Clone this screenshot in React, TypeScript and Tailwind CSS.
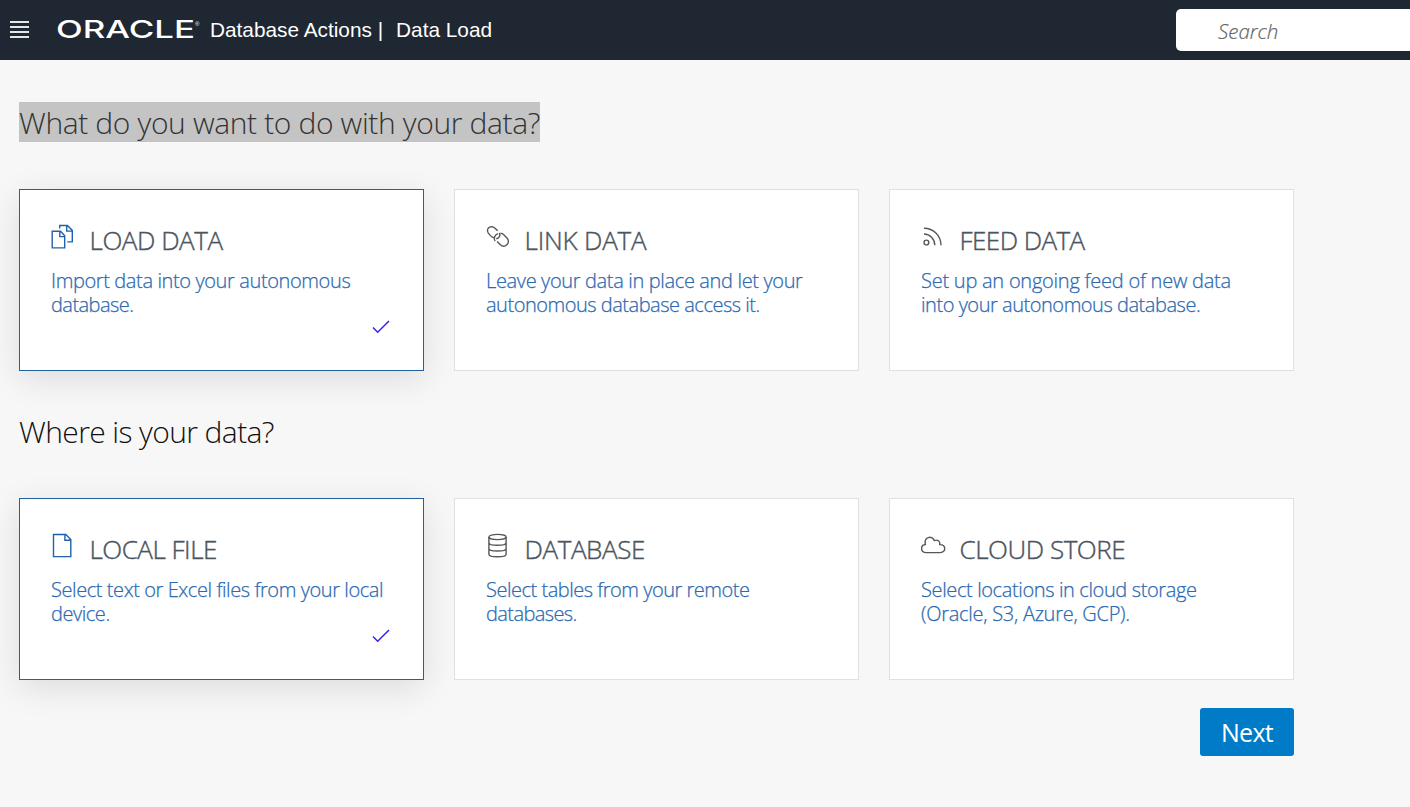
import type { ReactNode } from "react";

type Line = { text: string; tracking: string };
type CardProps = {
  icon: ReactNode;
  title: string;
  titleTracking: string;
  lines: Line[];
  selected?: boolean;
};

const CopyIcon = () => (
  <svg width="24" height="26" viewBox="0 0 24 26" fill="none" stroke="#2262ac" strokeWidth="1.4">
    <path d="M1.2 7.2h8.3l4.2 4.5v12.2H1.2z M8.8 7.2v5.4h4.9" />
    <path d="M8.7 4.6V1.5h7.7l4.9 4.9v11.5h-5 M15.7 1.5v5.6h5.6" />
  </svg>
);

const LinkIcon = () => (
  <svg width="24" height="26" viewBox="0 0 24 26" fill="none" stroke="#55585b" strokeWidth="1.4">
    <path d="M8.2 13.8C6.6 13.6 3.5 10.6 2.2 8.8 0.6 6.4 1.6 3.8 4.4 2.9c2-.6 3.6.2 4.9 1.5l2.4 2.4" />
    <path d="M13.4 8.8c1.4 2.6-.3 5.4-3.2 5.9" />
    <path d="M9.2 17.2c-2-2.7-.5-6.6 3-7.6" />
    <path d="M14.6 9.3c1.4 0 2.4.6 3.4 1.6l3 3.1c2 2.2 1.8 5-.2 6.8-2.1 1.9-4.7 1.6-6.7-.4l-3-3" />
  </svg>
);

const FeedIcon = () => (
  <svg width="24" height="26" viewBox="0 0 24 26" fill="none" stroke="#55585b" strokeWidth="1.4">
    <circle cx="5.4" cy="18.5" r="2.4" />
    <path d="M3 10c6 .1 10.7 4.8 10.8 11.2 M3 4.3c9.2.1 16.9 7 17 16.9" />
  </svg>
);

const FileIcon = () => (
  <svg width="24" height="26" viewBox="0 0 24 26" fill="none" stroke="#2262ac" strokeWidth="1.4">
    <path d="M2.5 1.5h12.3l5 5v17.1H2.5z M13.9 1.5v5.8h5.9" />
  </svg>
);

const DatabaseIcon = () => (
  <svg width="24" height="26" viewBox="0 0 24 26" fill="none" stroke="#55585b" strokeWidth="1.4">
    <ellipse cx="11.5" cy="4" rx="8.6" ry="2.6" />
    <path d="M2.9 4v17.2c0 3.4 17.2 3.4 17.2 0V4 M2.9 9.7c0 3.4 17.2 3.4 17.2 0 M2.9 15.4c0 3.4 17.2 3.4 17.2 0" />
  </svg>
);

const CloudIcon = () => (
  <svg width="25" height="26" viewBox="0 0 25 26" fill="none" stroke="#55585b" strokeWidth="1.4">
    <path d="M5 19.6c-5.7 0-5.9-7.4-.6-8.1C2.6 4.1 11 1.8 13.3 7.6c3.2-1.4 6.1.4 5.4 4 6.6-.2 6.6 8 .6 8z" />
  </svg>
);

const CheckIcon = () => (
  <svg width="18" height="14" viewBox="0 0 18 14" fill="none" stroke="#3024f0" strokeWidth="1.5">
    <path d="m1 7.5 4.7 4.7L17 1" />
  </svg>
);

function Card({ icon, title, titleTracking, lines, selected }: CardProps) {
  return (
    <div
      className={
        selected
          ? "relative h-[182px] w-[405px] border border-[#22609f] bg-white pl-[31px] pt-[34px] shadow-[0_8px_32px_rgba(0,0,0,0.11)]"
          : "relative h-[182px] w-[405px] border border-[#e0e0e0] bg-white pl-[31px] pt-[34px]"
      }
    >
      <div className="flex h-[35px]">
        <div className="w-[38.5px] shrink-0">{icon}</div>
        <h3 className={`whitespace-nowrap text-[26px] leading-[32px] text-[#4c545e] [-webkit-text-stroke:0.4px_#4c545e] ${titleTracking}`}>
          {title}
        </h3>
      </div>
      <p className="pt-[10px] text-[20px] leading-6 text-[#2b69b1] [-webkit-text-stroke:0.25px_#2b69b1]">
        {lines.map((line) => (
          <span key={line.text} className={`block whitespace-nowrap ${line.tracking}`}>
            {line.text}
          </span>
        ))}
      </p>
      {selected && (
        <div className="absolute bottom-[36px] right-[33px]">
          <CheckIcon />
        </div>
      )}
    </div>
  );
}

export default function App() {
  return (
    <div className="h-[807px] w-[1410px] overflow-hidden bg-[#f7f7f7] font-['Open_Sans','Noto_Sans',sans-serif] font-light">
      <header className="flex h-[60px] items-center justify-between bg-[#1e2732] pl-[10px]">
        <div className="flex items-center">
          <div className="flex w-[19px] flex-col gap-[3px] pb-px">
            <span className="h-[2px] bg-[#e4e6e8]" />
            <span className="h-[2px] bg-[#e4e6e8]" />
            <span className="h-[2px] bg-[#e4e6e8]" />
            <span className="h-[2px] bg-[#e4e6e8]" />
          </div>
          <svg className="ml-[27px]" width="147" height="36" viewBox="0 0 147 36" fill="white">
            <text x="0" y="26.2" fontFamily="Inter, sans-serif" fontSize="24.5" fontWeight="500" textLength="139" lengthAdjust="spacingAndGlyphs">ORACLE</text>
            <text x="139" y="14" fontFamily="Liberation Sans, sans-serif" fontSize="6">®</text>
          </svg>
          <div className="ml-[7px] flex whitespace-pre font-['Liberation_Sans',Arial,sans-serif] text-[20.8px] font-normal text-white">
            <span>Database Actions |</span>
            <span className="ml-[13px]">Data Load</span>
          </div>
        </div>
        <div className="flex h-[42px] w-[234px] items-center rounded-l-[5px] bg-white pl-[42px] text-[20.5px] italic text-[#666] [-webkit-text-stroke:0.2px_#666]">
          <span className="pt-[3px]">Search</span>
        </div>
      </header>
      <main className="w-[1294px] pl-[19px] pt-[42px]">
        <h2 className="flex h-10">
          <span className="h-10 w-[521px] whitespace-nowrap bg-[#c4c4c4] text-[30px] leading-[42px] tracking-[-0.368px] text-[#333]">
            What do you want to do with your data?
          </span>
        </h2>
        <section className="mt-[47px] flex gap-[30px]">
          <Card selected icon={<CopyIcon />} title="LOAD DATA" titleTracking="tracking-[-0.45px]" lines={[
            { text: "Import data into your autonomous", tracking: "tracking-[-0.38px]" },
            { text: "database.", tracking: "tracking-[-0.55px]" },
          ]} />
          <Card icon={<LinkIcon />} title="LINK DATA" titleTracking="tracking-[-0.2px]" lines={[
            { text: "Leave your data in place and let your", tracking: "tracking-[-0.35px]" },
            { text: "autonomous database access it.", tracking: "tracking-[-0.48px]" },
          ]} />
          <Card icon={<FeedIcon />} title="FEED DATA" titleTracking="tracking-[-0.55px]" lines={[
            { text: "Set up an ongoing feed of new data", tracking: "tracking-[-0.24px]" },
            { text: "into your autonomous database.", tracking: "tracking-[-0.46px]" },
          ]} />
        </section>
        <h2 className="mt-10 h-10 whitespace-nowrap text-[30px] leading-[42px] tracking-[-0.6px] text-[#111]">Where is your data?</h2>
        <section className="mt-[47px] flex gap-[30px]">
          <Card selected icon={<FileIcon />} title="LOCAL FILE" titleTracking="tracking-[-0.5px]" lines={[
            { text: "Select text or Excel files from your local", tracking: "tracking-[-0.42px]" },
            { text: "device.", tracking: "tracking-[-0.45px]" },
          ]} />
          <Card icon={<DatabaseIcon />} title="DATABASE" titleTracking="tracking-[-0.4px]" lines={[
            { text: "Select tables from your remote", tracking: "tracking-[-0.48px]" },
            { text: "databases.", tracking: "tracking-[-0.6px]" },
          ]} />
          <Card icon={<CloudIcon />} title="CLOUD STORE" titleTracking="tracking-[-0.45px]" lines={[
            { text: "Select locations in cloud storage", tracking: "tracking-[-0.38px]" },
            { text: "(Oracle, S3, Azure, GCP).", tracking: "tracking-[-0.27px]" },
          ]} />
        </section>
        <div className="mt-7 flex justify-end">
          <button className="h-12 w-[94px] rounded-[3px] bg-[#007bc8] pt-[2px] text-[25px] font-normal tracking-[-0.7px] text-white">Next</button>
        </div>
      </main>
    </div>
  );
}
